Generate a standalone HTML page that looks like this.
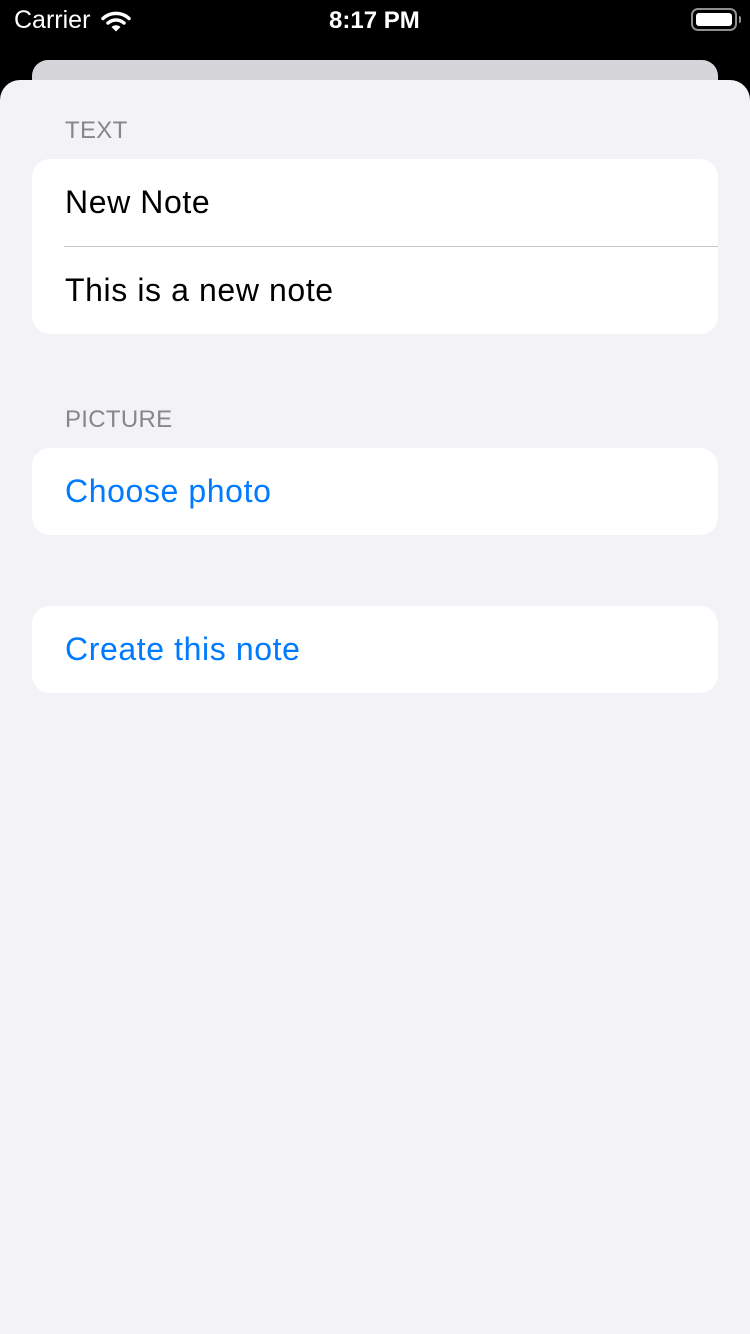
<!DOCTYPE html>
<html><head><meta charset="utf-8"><style>
*{margin:0;padding:0;box-sizing:border-box}
html,body{width:750px;height:1334px;overflow:hidden}
body{background:#f2f2f7;position:relative;font-family:"Liberation Sans",sans-serif}
.top{position:absolute;left:0;top:0;width:750px;height:100px;background:#000}
.sb{position:absolute;color:#fff;font-size:25px;top:6px}
.back{position:absolute;left:32px;top:60px;width:686px;height:60px;background:#d6d6da;border-radius:16px}
.sheet{position:absolute;left:0;top:80px;width:750px;height:1254px;background:#f2f2f7;border-radius:20px 20px 0 0}
.hdr{position:absolute;left:65px;font-size:24px;color:#86868b;letter-spacing:0.3px}
.card{position:absolute;left:32px;width:686px;background:#fff;border-radius:18px}
.row{height:87px;line-height:87px;padding-left:33px;font-size:32px;letter-spacing:0.6px;color:#000}
.blue{color:#007aff}
.sep{height:1px;background:#c6c6c8;margin-left:32px}
</style></head><body>
<div class="top"></div>
<div class="sb" style="left:14px">Carrier</div>
<svg style="position:absolute;left:101px;top:10px" width="30" height="22" viewBox="0 0 30 22">
<path d="M2 8.5A19 19 0 0 1 28 8.5" stroke="#fff" stroke-width="3.5" fill="none" stroke-linecap="round"/>
<path d="M7 13A12 12 0 0 1 23 13" stroke="#fff" stroke-width="3.5" fill="none" stroke-linecap="round"/>
<path d="M10.5 17L15 21.5L19.5 17A6.5 6.5 0 0 0 10.5 17Z" fill="#fff"/>
</svg>
<div class="sb" style="left:329px;font-weight:600;font-size:24px;top:7px">8:17 PM</div>
<div style="position:absolute;left:691px;top:8px;width:46px;height:23px;border:2px solid #8e8e93;border-radius:7px;padding:3px"><div style="width:100%;height:100%;background:#fff;border-radius:3px"></div></div>
<div style="position:absolute;left:739px;top:16px;width:2px;height:7px;background:#8e8e93;border-radius:0 2px 2px 0"></div>
<div class="back"></div>
<div class="sheet"></div>
<div class="hdr" style="top:117px">TEXT</div>
<div class="card" style="top:159px">
<div class="row">New Note</div><div class="sep"></div>
<div class="row">This is a new note</div>
</div>
<div class="hdr" style="top:406px">PICTURE</div>
<div class="card" style="top:448px"><div class="row blue">Choose photo</div></div>
<div class="card" style="top:606px"><div class="row blue">Create this note</div></div>
</body></html>
